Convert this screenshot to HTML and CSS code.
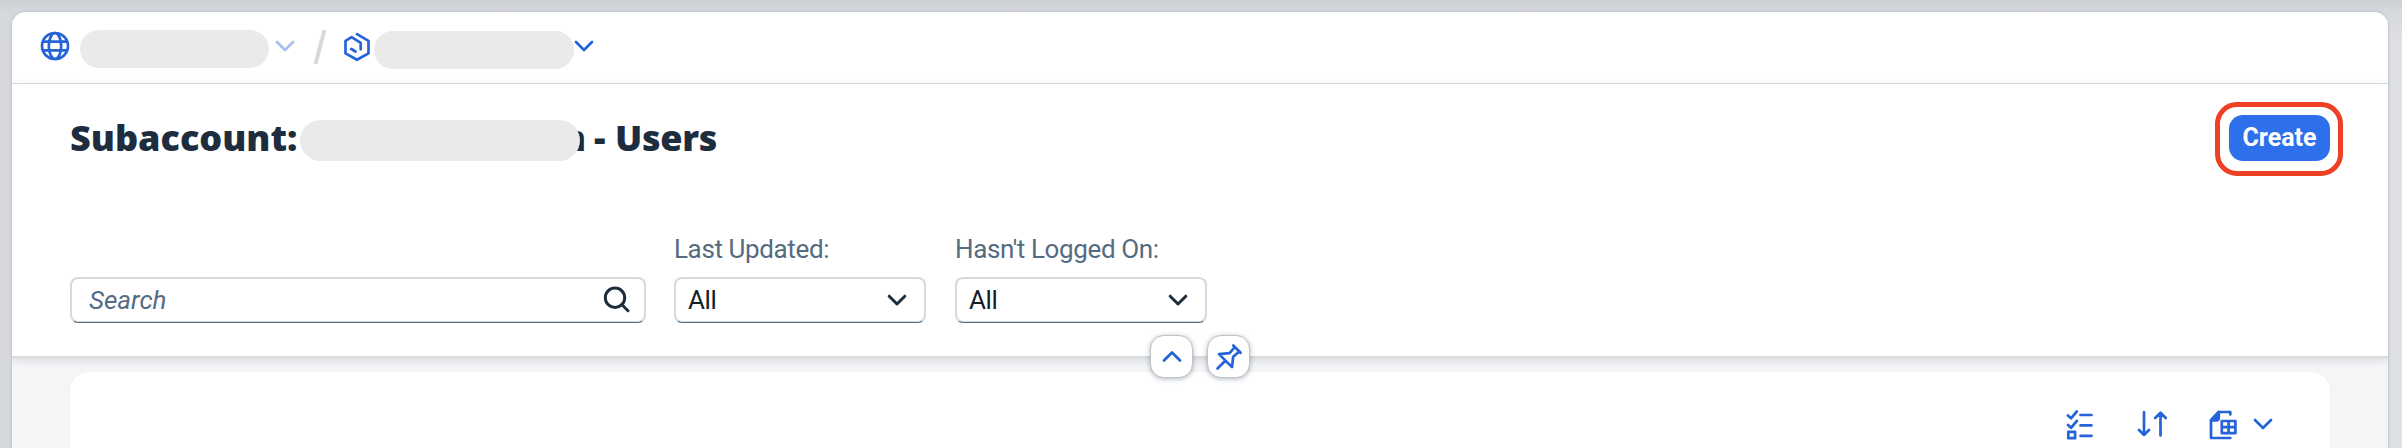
FILE: index.html
```html
<!DOCTYPE html>
<html lang="en">
<head>
<meta charset="utf-8">
<title>Subaccount - Users</title>
<link rel="stylesheet" href="styles.css">
</head>
<body>
<main class="shell">
  <nav class="crumbs">
    <svg class="icon globe" width="30" height="30" viewBox="0 0 30 30"><circle cx="15" cy="15" r="13"/><ellipse cx="15" cy="15" rx="6.2" ry="13"/><path d="M3.5 10.6h23M3.5 19.4h23"/></svg>
    <span class="mask mask-global"></span>
    <svg class="icon chevron faded" width="20" height="13" viewBox="0 0 20 13"><path d="M2 2l8 8 8-8"/></svg>
    <svg class="slash" width="14" height="34" viewBox="0 0 14 34"><path d="M11.5 0L2.5 34"/></svg>
    <svg class="icon hex" width="28" height="30" viewBox="0 0 28 30"><path d="M14 2.2l11.5 6.6v12.6L14 27.8 2.5 21.4V8.8L8.6 5.2l9.1 5.6v6.5M8.3 17l4.2 2.5"/></svg>
    <span class="mask mask-sub"></span>
    <svg class="icon chevron" width="20" height="13" viewBox="0 0 20 13"><path d="M2 2l8 8 8-8"/></svg>
  </nav>
  <header class="page-header">
    <div class="title-row">
      <h1 class="title"><span class="t-sub">Subaccount:</span><span class="mask mask-title"></span><span class="t-n">n</span><span class="t-dash">-</span><span class="t-users">Users</span></h1>
      <div class="highlight"><button class="create">Create</button></div>
    </div>
    <div class="filters">
      <div class="field search"><span class="placeholder">Search</span><svg class="icon dark" width="28" height="28" viewBox="0 0 28 28"><circle cx="12" cy="11.7" r="9.7"/><path d="M18.8 18.5l6.2 6.2"/></svg></div>
      <div class="filter">
        <label class="label">Last Updated:</label>
        <div class="field"><span class="value">All</span><svg class="icon chevron dark" width="20" height="13" viewBox="0 0 20 13"><path d="M2.2 2.2L10 10l7.8-7.8"/></svg></div>
      </div>
      <div class="filter last">
        <label class="label">Hasn't Logged On:</label>
        <div class="field"><span class="value">All</span><svg class="icon chevron dark" width="20" height="13" viewBox="0 0 20 13"><path d="M2.2 2.2L10 10l7.8-7.8"/></svg></div>
      </div>
    </div>
    <div class="header-actions">
      <button class="round"><svg class="icon" width="20" height="13" viewBox="0 0 20 13"><path d="M2 10.5l8-8 8 8"/></svg></button>
      <button class="round"><svg class="icon pin" width="28" height="28" viewBox="0 0 28 28"><path d="M18.3 2.5l7.3 7.3M19.8 4l-5.2 6.2-10.6.9 13 13 1.2-10.4 6-5.2M10.3 17.7L2.5 25.5"/></svg></button>
    </div>
  </header>
  <section class="content">
    <div class="panel">
      <svg class="icon" width="28" height="30" viewBox="0 0 28 30"><path d="M2 5.5l3 2.8 5.8-6.8M2 15l3 2.8 5.8-6.8M14.5 5h11M14.5 15.4h11M14.5 25.8h11M2.3 21.8h6.8v6.4H2.3z"/></svg>
      <svg class="icon sort" width="30" height="28" viewBox="0 0 30 28"><path d="M7 2v23M2 20l5 5 5-5M23.5 25.5V3M18.2 8l5.3-5.3L28.8 8"/></svg>
      <svg class="icon doc" width="30" height="30" viewBox="0 0 30 30"><path d="M22.3 28H3V10.2L10.8 2h11.5v2.5"/><path class="solid" d="M3 10.5L10.8 2v5.8q0 2.7-2.7 2.7z"/><path d="M13.8 11h13.6v12.2H13.8zM20.6 11v12.2M13.8 17.1h13.6"/></svg>
      <svg class="icon chevron" width="20" height="14" viewBox="0 0 20 14"><path d="M2 2l8 8 8-8"/></svg>
    </div>
  </section>
</main>
</body>
</html>
```
FILE: styles.css
```css
* { box-sizing: border-box; }
body {
  margin: 0;
  width: 2402px;
  height: 448px;
  overflow: hidden;
  padding: 12px 14px 0 12px;
  background: linear-gradient(#cdcfd4, #d5d8dc 12px, transparent 40px), linear-gradient(90deg, #d6d8dc 0, #d8dadd 50%, #dfe0e3 100%);
  font-family: Roboto, "Liberation Sans", sans-serif;
  font-size: 26px;
  letter-spacing: -.38px;
}
.shell {
  height: 436px;
  border-radius: 14px 14px 0 0;
  background: #f4f5f7;
  box-shadow: 0 0 2px 1px #bdc3cf;
  overflow: hidden;
}
.icon {
  display: block;
  flex: none;
  fill: none;
  stroke: #2463d8;
  stroke-width: 2.7;
  stroke-linecap: round;
  stroke-linejoin: round;
}
.solid { fill: #2463d8; }
.dark { stroke: #1d2d3e; stroke-width: 3; }
.faded { opacity: .4; }
.mask { flex: none; background: #eaeaea; border-radius: 21px; }
.crumbs {
  display: flex;
  align-items: flex-start;
  height: 72px;
  padding: 18px 0 0 28px;
  background: #fff;
  border-bottom: 1px solid #dfe1e3;
}
.globe { margin-top: 1px; }
.mask-global { width: 189px; height: 38px; margin-left: 10px; }
.crumbs .chevron { margin: 10px 0 0 6px; }
.slash { margin-left: 18px; stroke: #d9d9d9; stroke-width: 4; }
.hex { margin: 2px 0 0 16px; }
.mask-sub { width: 200px; height: 38px; margin: 1px 0 0 3px; }
.crumbs .mask-sub + .chevron { margin-left: 0; }
.page-header {
  position: relative;
  height: 274px;
  background: #fff;
  border-bottom: 2px solid #d9dbdd;
  box-shadow: 0 2px 8px rgba(34, 53, 72, .14);
}
.title-row {
  display: flex;
  justify-content: space-between;
  align-items: flex-start;
  padding: 18px 45px 0 58px;
}
.title {
  display: flex;
  align-items: center;
  height: 41px;
  margin: 18px 0 0;
  color: #1d2d3e;
  font-family: "Open Sans", "Noto Sans", sans-serif;
  font-size: 36px;
  font-weight: 800;
  letter-spacing: 0;
  line-height: 38px;
  white-space: nowrap;
}
.title span:not(.mask) { margin-top: -6px; }
.t-sub { width: 230px; letter-spacing: 0; }
.mask-title { width: 280px; height: 41px; position: relative; z-index: 1; }
.t-n { width: 22px; margin-left: -18px; }
.t-dash { width: 31px; padding-left: 10px; }
.t-users { letter-spacing: -.3px; }
.highlight {
  display: flex;
  padding: 8px 8px 10px 9px;
  width: 128px;
  height: 74px;
  border: 5px solid #ed4024;
  border-radius: 22px;
}
.create {
  width: 101px;
  height: 46px;
  padding: 0;
  border: 0;
  border-radius: 14px;
  background: #2e6feb;
  color: #fff;
  font: 700 25px/44px Roboto, sans-serif;
}
.filters {
  display: flex;
  align-items: flex-end;
  gap: 28px;
  padding: 55px 0 0 58px;
}
.filter { width: 252px; }
.filter.last { margin-left: 1px; }
.label {
  display: block;
  height: 46px;
  line-height: 32px;
  padding: 2px 0 0;
  color: #556b82;
  white-space: nowrap;
}
.field {
  display: flex;
  align-items: center;
  justify-content: space-between;
  height: 46px;
  padding: 0 17px 2px 12px;
  border: 2px solid #d5d9df;
  border-radius: 8px;
  box-shadow: inset 0 -1px #d5d9df;
  border-bottom: 1px solid #556b82;
  background: #fff;
  color: #131e29;
}
.field .chevron { margin-top: 2px; }
.search { width: 576px; padding: 0 13px 2px 17px; }
.placeholder { color: #556b82; font-style: italic; letter-spacing: 0; }
.header-actions {
  position: absolute;
  left: 1138px;
  top: 251px;
  display: flex;
  gap: 14px;
}
.round {
  display: flex;
  align-items: center;
  justify-content: center;
  width: 43px;
  height: 43px;
  padding: 0;
  border: 1px solid #bcc3ca;
  border-radius: 14px;
  background: #fff;
  box-shadow: 0 1px 5px rgba(34, 53, 72, .35);
}
.content { padding: 14px 58px 0; }
.panel {
  display: flex;
  align-items: flex-start;
  justify-content: flex-end;
  height: 80px;
  padding: 38px 57px 0 0;
  border-radius: 20px 20px 0 0;
  background: #fff;
}
.sort { margin-left: 43px; }
.doc { margin-left: 41px; }
.panel .chevron { margin: 8px 0 0 15px; }
```
